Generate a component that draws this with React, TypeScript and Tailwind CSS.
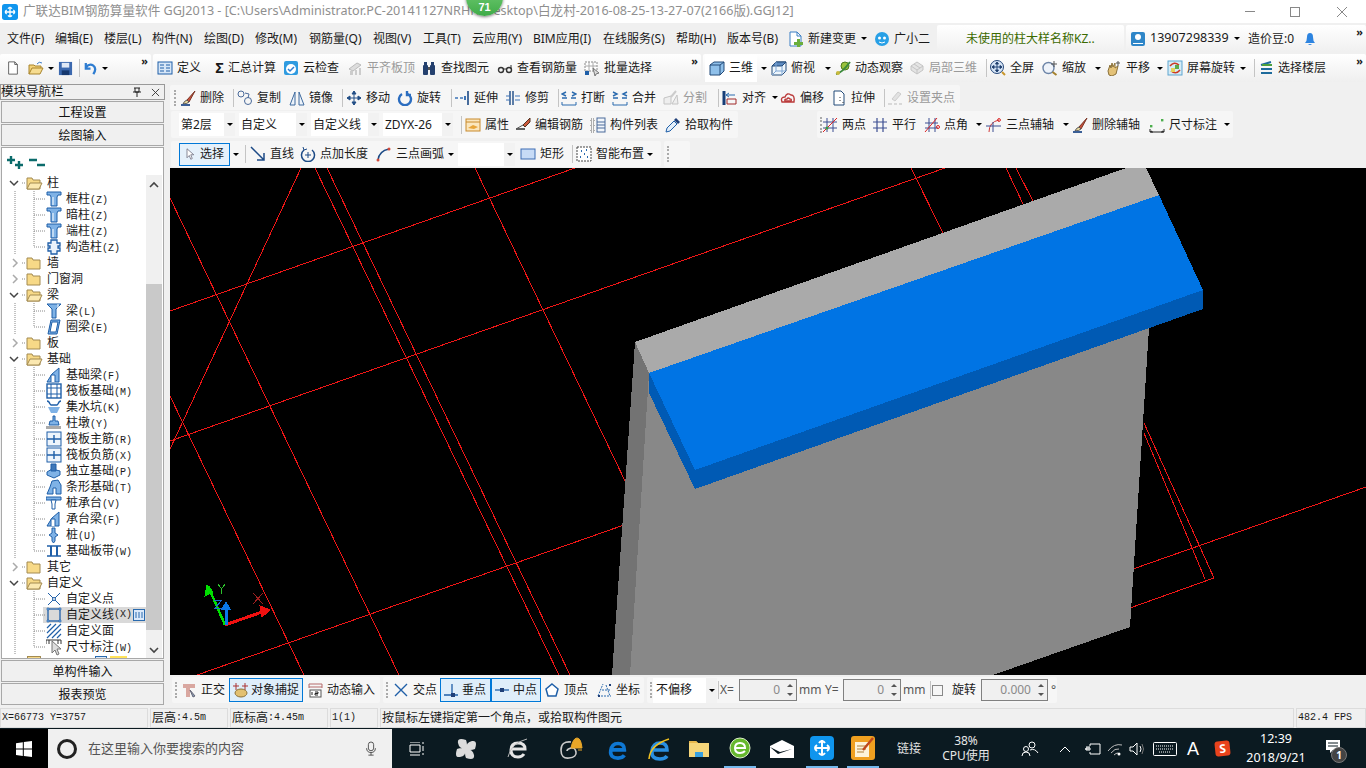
import type { ReactNode } from "react";

// toolbar and tree icons, all in a 16x16 box
const B = "#1f5fa8";
const L = "#7fb2e6";
const ICONS: Record<string, ReactNode> = {
  new: <path d="M3 1h7l3 3v11H3z M10 1v3h3" fill="#fff" stroke="#555" />,
  open: <><path d="M1 14V5h5l1 1h6v2" fill="#f3d27a" stroke="#a8842c" /><path d="M1 14l3-6h11l-3 6z" fill="#f6dc90" stroke="#a8842c" /><path d="M9 4q2-3 5-1" fill="none" stroke="#3a7bc8" /></>,
  save: <><rect x="1" y="1" width="14" height="14" fill="#3b68ae" /><rect x="4" y="2" width="8" height="5" fill="#dfe8f5" /><rect x="4" y="10" width="8" height="5" fill="#16386e" /></>,
  undo: <path d="M3 2v6h5M3 7q4-5 8-2t0 9" fill="none" stroke="#2f7dd1" strokeWidth="2.4" />,
  def: <><rect x="1" y="2" width="14" height="12" fill="#d6e6f7" stroke={B} /><path d="M3 5h4M3 8h4M3 11h4M9 5h4M9 8h4M9 11h4" stroke={B} /></>,
  cloud: <><rect x="1" y="1" width="14" height="14" rx="2" fill="#2f9be0" /><circle cx="8" cy="9" r="5" fill="#fff" /><path d="M5 9l2 2 4-4" fill="none" stroke="#2f7dd1" strokeWidth="1.5" /></>,
  flat: <><path d="M2 9l8-6 4 2-8 6z" fill="#ddd" stroke="#bbb" /><path d="M3 11h3v4H3zM8 10h2v5H8zM12 8h2v7h-2z" fill="#ccc" /></>,
  binoc: <><rect x="2" y="5" width="5" height="10" rx="1" fill="#24406e" /><rect x="9" y="5" width="5" height="10" rx="1" fill="#24406e" /><rect x="3" y="2" width="3" height="3" fill="#24406e" /><rect x="10" y="2" width="3" height="3" fill="#24406e" /><rect x="7" y="7" width="2" height="3" fill="#555" /></>,
  glasses: <><circle cx="4" cy="10" r="2.5" fill="none" stroke="#333" strokeWidth="1.4" /><circle cx="12" cy="10" r="2.5" fill="none" stroke="#333" strokeWidth="1.4" /><path d="M6 9h4M14 9V5" stroke="#333" /></>,
  batch: <><path d="M1 2h12v9H1z" fill="#fff" stroke="#888" strokeDasharray="2 1" /><path d="M1 6h12M5 2v9M9 2v9" stroke="#aaa" /><rect x="1" y="11" width="4" height="4" fill={B} /><path d="M9 8l6 5-3 1-1 2z" fill="#ddd" stroke="#777" /></>,
  cube: <><path d="M1 5l4-3h10v9l-4 4H1z" fill="#8fc0ea" stroke="#234a78" /><path d="M1 5h10v10M11 5l4-3" fill="none" stroke="#234a78" /></>,
  cubeTop: <><path d="M1 6l4-4h10v9l-4 4H1z" fill="#eef6fc" stroke="#234a78" /><path d="M1 6l4-4h10l-4 4z" fill="#5c8ac0" stroke="#234a78" /><path d="M11 6v9M5 2v9h10M5 11l-4 4" fill="none" stroke="#7ea6d4" /></>,
  orbit: <><circle cx="10" cy="6" r="4" fill="#9ac23c" stroke="#4f7a1c" /><path d="M1 14q6-1 14-12" fill="none" stroke="#3c8a3c" strokeWidth="2" /><circle cx="3" cy="13" r="2" fill="#c9b93c" /></>,
  local3d: <><path d="M2 6l6-4 6 4v4l-6 4-6-4z" fill="#e4e4e4" stroke="#c4c4c4" /><path d="M2 6l6 4 6-4M8 10v4M5 4l6 4" fill="none" stroke="#c4c4c4" /></>,
  full: <><circle cx="7" cy="7" r="6.5" fill="#d5e4f6" stroke="#26487a" /><path d="M7 2v10M2 7h10M7 2l-1.5 2h3zM7 12l-1.5-2h3zM2 7l2-1.5v3zM12 7l-2-1.5v3z" stroke="#26487a" /><path d="M12 12l3 3" stroke="#c8962c" strokeWidth="2" /></>,
  zoom: <><circle cx="6.5" cy="8" r="5.5" fill="#eef3fa" stroke="#6d85a8" strokeWidth="1.4" /><path d="M10.5 12l4 3" stroke="#a5802c" strokeWidth="2" /><path d="M12 1v6M9 4h6" stroke="#555" /></>,
  hand: <><path d="M2 11l2-6 1 3 1-5 1 4 2-4 0 5 3-2-2 8-4 2-3-1z" fill="#e4c278" stroke="#8a7038" /><path d="M12 1v5M10 3h4" stroke="#555" /></>,
  screen: <><rect x="1" y="1" width="14" height="14" fill="#d6ecf6" stroke="#5fa5d0" /><path d="M3 6q4-5 9-1M13 10q-4 5-9 1" fill="none" stroke="#cc3a26" strokeWidth="1.6" /><rect x="4" y="8" width="4" height="4" fill="#e6d35a" /><rect x="8" y="5" width="4" height="4" fill="#5caa4c" /></>,
  floors: <><path d="M3 5l10-3M3 9h11M3 13h11" stroke="#1e6b9c" strokeWidth="2" /><path d="M4 5h10" stroke="#4ca03c" strokeWidth="2" /></>,
  brush: <><path d="M15 1L7 10l2 2z" fill="#c8503c" stroke="#7a3424" /><path d="M7 10q-3 1-4 4 4 0 6-2z" fill="#e6d59a" stroke="#555" /><path d="M1 15h9" stroke="#3b5f96" strokeWidth="2" /></>,
  copy: <><circle cx="4" cy="4" r="3" fill="none" stroke="#4a6a9a" /><circle cx="11" cy="11" r="3.5" fill="none" stroke="#4a6a9a" /><path d="M8 3l4 1-1 4" fill="none" stroke="#4a6a9a" /></>,
  mirror: <path d="M6 2v13H1zM10 2v13h5z" fill="#edf3fa" stroke="#3e6a9e" />,
  move: <path d="M8 1v14M1 8h14M8 1L6 4h4zM8 15l-2-3h4zM1 8l3-2v4zM15 8l-3-2v4z" fill="#224e86" stroke="#224e86" />,
  rotate: <path d="M5 4a6 6 0 1 0 6 0M10 1v4h4" fill="none" stroke="#2b6dc0" strokeWidth="2.4" />,
  extend: <><path d="M14 1v14" stroke="#1c4a86" strokeWidth="1.6" /><path d="M1 8h3M6 8h3" stroke="#3e75b8" strokeWidth="1.6" /><path d="M11 6v4" stroke="#3e75b8" strokeWidth="2" /></>,
  trim: <><path d="M5 1v14M8 1v14" stroke="#1c4a86" strokeWidth="1.4" /><path d="M1 6h4M1 10h4M10 6h5M10 10h5" stroke="#3e75b8" /></>,
  break: <><path d="M1 12v3h14v-3" fill="none" stroke="#2a6aae" /><path d="M1 8h5M10 8h5M5 2L1 4l4 2M11 2l4 2-4 2" fill="none" stroke="#2a6aae" strokeWidth="1.4" /></>,
  merge: <><path d="M1 12v3h14v-3" fill="none" stroke="#2a6aae" /><path d="M1 8h5M10 8h5M1 2l4 2-4 2M15 2l-4 2 4 2" fill="none" stroke="#2a6aae" strokeWidth="1.4" /></>,
  split: <><path d="M1 14V8l7-2v8zM9 14l5-9 1 9z" fill="#eee" stroke="#c4c4c4" /><path d="M13 1L8 7" stroke="#ccc" strokeWidth="2" /></>,
  align: <><path d="M2 1v14" stroke="#173e78" strokeWidth="3" /><path d="M5 14h9v-5H5z" fill="none" stroke="#a02828" /><path d="M4 5h9M4 5l3-2M4 5l3 2" fill="none" stroke="#2a6aae" /></>,
  offset: <path d="M2 12q-2-5 3-5 2-5 6-2 4 0 3 7zM5 11q-1-2 2-2 1-2 3 0 2 0 1 2z" fill="none" stroke="#bb3a3a" strokeWidth="1.4" />,
  stretch: <><path d="M3 1h7l3 3v11H3z" fill="#fff" stroke="#234a78" /><path d="M9 7v1M9 10v1M12 12v1" stroke="#333" /></>,
  grip: <><path d="M11 2l3 2-6 7-3-2z" fill="#e2e2e2" stroke="#ccc" /><path d="M1 14h4M7 14h3M12 14h3" stroke="#bbb" /></>,
  attr: <><rect x="1" y="2" width="14" height="12" fill="#fbe6bd" stroke="#c88a2c" /><path d="M1 5h14" stroke="#c88a2c" /><path d="M3 11l5-3 5 2-4 2z" fill="#e8a53a" /></>,
  pen: <><path d="M15 1L8 8l2 2 5-5z" fill="#cc5a3c" stroke="#553322" /><path d="M1 12h9" stroke="#222" strokeWidth="1.4" /><path d="M1 12l7-4" stroke="#555" /></>,
  list: <><path d="M1 2h3v3H1zM1 7h3v3H1zM1 12h3v3H1z" fill="none" stroke="#666" strokeDasharray="1 1" /><rect x="7" y="1" width="8" height="14" fill="#f2f6fb" stroke="#4a6a9a" /><path d="M7 5h8M7 8h8M7 11h8" stroke="#4a6a9a" /></>,
  pick: <><path d="M1 15l1-4 7-7 3 3-7 7z" fill="#e4effa" stroke="#1f5fa8" /><path d="M9 3l2-2 4 4-2 2z" fill="#1f3f78" /></>,
  two: <><path d="M5 1v14M11 1v14M1 5h14M1 11h14" stroke="#3c4f92" /><path d="M1 15L15 1" stroke="#d22" /><circle cx="5" cy="11" r="1.5" fill="#3c9a3c" /></>,
  para: <path d="M5 1v14M11 1v14M1 5h14M1 11h14" stroke="#3c4f92" strokeWidth="1.2" />,
  angle: <><path d="M5 1v14M11 1v14M1 6h13M1 11h13" stroke="#3c4f92" /><path d="M1 15L13 1" stroke="#d22" /><circle cx="14" cy="10" r="1.5" fill="none" stroke="#d22" /></>,
  arcAux: <><path d="M3 15q0-10 10-12" fill="none" stroke="#d23a3a" /><path d="M0 9h15M7 5v10" stroke="#3c4f92" /><circle cx="13" cy="3" r="1.4" fill="none" stroke="#d22" /></>,
  dim: <><path d="M1 15h14M1 12v3M15 12v3M1 15l2-1v2M15 15l-2-1v2" stroke="#222" fill="none" /><rect x="1" y="8" width="2.4" height="2.4" fill="#4cae4c" /><rect x="12" y="2" width="2.4" height="2.4" fill="#4cae4c" /></>,
  cursor: <path d="M4 1v12l3-3 2 5 2-1-2-5h4z" fill="#fff" stroke="#667" />,
  line: <path d="M1 1l13 13M14 7v7H7" fill="none" stroke="#1c4a86" strokeWidth="1.5" />,
  ptlen: <><path d="M4 4a6.5 6.5 0 1 0 8 0" fill="none" stroke="#1c4a86" strokeWidth="1.5" /><path d="M8 6v6M5 9h6M3 1l1 3 3-1" fill="none" stroke="#1c4a86" /></>,
  arc: <><path d="M2 14q1-9 11-11" fill="none" stroke="#1c4a86" strokeWidth="1.5" /><circle cx="2" cy="14" r="1.5" fill="#d24a3a" /><circle cx="13" cy="3" r="1.5" fill="#d24a3a" /></>,
  rect: <rect x="1" y="3" width="14" height="10" fill="#c7dbf6" stroke="#3d6db3" />,
  smart: <><rect x="1" y="1" width="14" height="14" fill="#fff" stroke="#444" strokeDasharray="2 1" /><path d="M5 5h1M10 4h1M8 8h1M4 11h1M11 11h1" stroke="#2a6aae" strokeWidth="2" /></>,
  ortho: <><path d="M2 2h12v4h-5v9H5V6H2z" fill="#d9a7a0" /><path d="M9 8l5 6-2 1z" fill="#8aa0b8" stroke="#667" /></>,
  snap: <><path d="M4 1v7M13 1v7M1 4h6M10 4h6" stroke="#a33" /><ellipse cx="9" cy="11" rx="6" ry="4" fill="#e2c070" stroke="#8a7038" /></>,
  dyn: <><path d="M2 2h13M2 5h13M2 2v4M15 2v4" stroke="#b56a6a" fill="none" /><rect x="3" y="8" width="11" height="7" fill="#fff" stroke="#555" /><path d="M5 10v3M8 10h3v1.5H8V13h3" stroke="#222" fill="none" /></>,
  cross: <path d="M2 2l12 12M14 2L2 14" stroke="#1f5fa8" strokeWidth="1.4" />,
  perp: <><path d="M1 13h14M9 2v11" stroke="#1f5fa8" strokeWidth="1.3" /><rect x="8" y="11" width="4" height="4" fill="#1f3f78" /></>,
  mid: <><path d="M1 8h14" stroke="#1f5fa8" strokeWidth="1.3" /><rect x="6" y="6" width="4" height="4" fill="#1f3f78" /></>,
  vertex: <path d="M8 2l6 5-2 7H4L2 7z" fill="#fff" stroke="#1f5fa8" strokeWidth="1.5" />,
  coord: <><path d="M2 14l5-12M2 14h13M6 8h8M10 3l4 11" stroke="#2a6aae" strokeDasharray="2 1" /><path d="M2 13h2v2H2zM13 2h2v2h-2z" fill="#1f3f78" /></>,
  change: <><path d="M2 1h7l4 4v10H2z" fill="#fff" stroke="#3b7fc4" /><path d="M9 1v4h4" fill="none" stroke="#3b7fc4" /><path d="M9 8h3v3h3v3h-3v2H9v-2H6v-3h3z" fill="#6aae3c" /></>,
  bot: <><circle cx="8" cy="8" r="7" fill="#28a0e6" /><circle cx="5.5" cy="7" r="1.5" fill="#fff" /><circle cx="10.5" cy="7" r="1.5" fill="#fff" /><path d="M5 11q3 2 6 0" fill="none" stroke="#fff" /></>,
  user: <><rect x="1" y="1" width="14" height="14" rx="2" fill="#2f86c8" /><circle cx="8" cy="6" r="3" fill="#fff" /><path d="M3 13h10v-1H3z" fill="#fff" /></>,
  bell: <path d="M3 12q2-2 2-6 0-4 3-4t3 4q0 4 2 6zM6 13q2 2 4 0z" fill="#2d84e0" />,
  // tree
  col: <><path d="M1 1h14v3h-3l-1 2v9H5V6L4 4H1z" fill={L} stroke={B} /><path d="M7 6v8" stroke="#fff" /></>,
  gz: <path d="M5 1h6v3h3v3h-2v2h2v3h-3v3H5v-3H2V9h2V7H2V4h3z" fill="#eaf2fb" stroke={B} strokeWidth="1.3" />,
  beam: <><path d="M1 1h14l-5 5v9H6V6z" fill={L} stroke={B} /><path d="M12 1v6" stroke="#fff" /></>,
  ring: <path d="M5 1h9l-3 14H2zM6 3l-2 10h6l2-10z" fill={L} stroke={B} />,
  jcl: <><path d="M1 15l5-8 7-6v14z" fill={L} stroke={B} /><path d="M5 15v-7h4v7" fill="#fff" stroke={B} /></>,
  raft: <><rect x="1" y="1" width="14" height="14" fill="#fff" stroke={B} strokeWidth="1.4" /><path d="M1 5h14M1 11h14M5 1v14M11 1v14" stroke={B} /></>,
  pit: <><path d="M1 2q2 0 3 3l1 1h6l1-1q1-3 3-3" fill="none" stroke={B} strokeWidth="1.3" /><path d="M2 8h12l-3 6H5z" fill={L} /></>,
  pier: <><path d="M7 1h2v5h3l1 4H3l1-4h3z" fill={L} stroke={B} /><rect x="0" y="11" width="15" height="3" fill="#aaa" /></>,
  rafm: <><rect x="1" y="1" width="14" height="14" fill="#eef5fc" stroke={B} /><path d="M1 8h14M8 4v8" stroke={B} strokeWidth="1.4" /></>,
  foot: <><path d="M1 9l5-3 8 2v4l-6 3-7-3z" fill={L} stroke={B} /><path d="M5 1h5v7H5z" fill="#3f77b8" stroke={B} /></>,
  strip: <path d="M1 15l3-7 2-6 6-1 3 5v9h-5V9H7v6z" fill={L} stroke={B} />,
  cap: <><path d="M0 2h15v3H0z" fill={L} stroke={B} /><path d="M5 5h5l-1 4v5H6V9z" fill="#fff" stroke={B} /></>,
  pile: <><path d="M6 1h3v5l3 2-3 2v4l-1.5 2L6 14v-4L3 8l3-2z" fill={L} stroke={B} /></>,
  band: <><path d="M1 3h14M1 13h14" stroke={B} strokeWidth="1.6" /><path d="M5 3v10M11 3v10" stroke={B} strokeWidth="2" /></>,
  cpt: <><path d="M2 2l12 12M14 2L2 14" stroke={B} /><circle cx="8" cy="8" r="1.5" fill="#fff" stroke={B} /></>,
  cln: <><rect x="2" y="2" width="12" height="12" fill="none" stroke={B} strokeWidth="1.3" /><path d="M1 1h2v2H1zM13 1h2v2h-2zM1 13h2v2H1zM13 13h2v2h-2z" fill={L} stroke={B} strokeWidth=".6" /></>,
  cfc: <path d="M1 5l4-4M1 10l9-9M1 15L15 1M6 15l9-9M11 15l4-4" stroke={B} strokeWidth="1.2" />,
  mark: <path d="M0 1h15M0 1v4M15 1v4M3 1v4M12 1v4" stroke="#333" fill="none" />,
};

const Icon = ({ n, c = "w-4 h-4" }: { n: string; c?: string }) => (
  <svg viewBox="0 0 16 16" className={`${c} shrink-0`}>
    {ICONS[n]}
  </svg>
);

const Caret = ({ w = "w-[14px]" }: { w?: string }) => (
  <div className={`${w} h-full shrink-0 flex items-center justify-center`}>
    <div className="w-0 h-0 border-x-[3px] border-x-transparent border-t-[3px] border-t-black" />
  </div>
);

const Sep = ({ w = "w-[8px]" }: { w?: string }) => (
  <div className={`${w} h-full shrink-0 flex items-center justify-center`}>
    <div className="w-px h-[18px] bg-[#c4c4c4]" />
  </div>
);

const Grip = ({ w = "w-[9px]" }: { w?: string }) => (
  <div className={`${w} h-full shrink-0 flex items-center pl-[3px]`}>
    <div className="h-[16px] border-l-2 border-dotted border-[#aaaaaa]" />
  </div>
);

const More = () => (
  <span className="ml-auto mr-[3px] self-start text-[11px] leading-[14px] font-bold">»</span>
);

const Tool = ({ i, t, w, dim, sel }: { i?: string; t: string; w: string; dim?: boolean; sel?: boolean }) => (
  <div
    className={`${w} shrink-0 flex items-center whitespace-nowrap ${dim ? "text-[#9a9a9a]" : "text-[#1a1a1a]"} ${
      sel ? "border border-[#0078d7] bg-[#dfeefa] h-[24px] pl-[2px] gap-[3px]" : "h-full gap-1"
    }`}
  >
    {i && <Icon n={i} />}
    <span>{t}</span>
  </div>
);

const Combo = ({ t, w }: { t: string; w: string }) => (
  <div className={`${w} h-[23px] shrink-0 bg-white flex items-center pl-[2px] mr-[4px]`}>
    <span className="flex-1 whitespace-nowrap">{t}</span>
    <div className="w-[11px] h-full bg-[#f2f2f2]">
      <Caret w="w-[11px]" />
    </div>
  </div>
);

const M = ({ children }: { children: ReactNode }) => (
  <span className="[font-family:'Liberation_Mono',monospace] text-[10px]">{children}</span>
);

const Spin = ({ v, w }: { v: string; w: string }) => (
  <div className={`${w} h-[22px] shrink-0 border border-[#808080] bg-[#f0f0f0] flex items-center text-[#8a8a8a]`}>
    <span className="flex-1 text-right pr-1">{v}</span>
    <div className="w-[12px] h-full flex flex-col items-center justify-center gap-[6px]">
      <div className="w-0 h-0 border-x-[3px] border-x-transparent border-b-[3px] border-b-[#555]" />
      <div className="w-0 h-0 border-x-[3px] border-x-transparent border-t-[3px] border-t-[#555]" />
    </div>
  </div>
);

const AppMark = ({ c }: { c: string }) => (
  <svg viewBox="0 0 24 24" className={c}>
    <rect width="24" height="24" rx="4" fill="#0f95ee" />
    <path d="M12 4v16M5 12h14M9 7q3-4 6 0M9 17q3 4 6 0M7 9q-4 3 0 6M17 9q4 3 0 6" fill="none" stroke="#fff" strokeWidth="2" />
  </svg>
);

const seg = "h-full bg-linear-to-b from-white to-[#efefef] rounded-[2px] flex items-center";
const segFlat = "bg-[#f6f6f6] rounded-[2px] flex items-center";

const MENU: [string, string][] = [
  ["文件(F)", "w-[48px]"],
  ["编辑(E)", "w-[49px]"],
  ["楼层(L)", "w-[48px]"],
  ["构件(N)", "w-[52px]"],
  ["绘图(D)", "w-[51px]"],
  ["修改(M)", "w-[54px]"],
  ["钢筋量(Q)", "w-[64px]"],
  ["视图(V)", "w-[50px]"],
  ["工具(T)", "w-[49px]"],
  ["云应用(Y)", "w-[61px]"],
  ["BIM应用(I)", "w-[70px]"],
  ["在线服务(S)", "w-[73px]"],
  ["帮助(H)", "w-[51px]"],
  ["版本号(B)", "w-[61px]"],
];

type Row = { t: string; k?: string; r?: "open" | "closed"; i?: string; last?: boolean; sel?: boolean };

const TREE: Row[] = [
  { t: "柱", r: "open" },
  { t: "框柱", k: "(Z)", i: "col" },
  { t: "暗柱", k: "(Z)", i: "col" },
  { t: "端柱", k: "(Z)", i: "col" },
  { t: "构造柱", k: "(Z)", i: "gz", last: true },
  { t: "墙", r: "closed" },
  { t: "门窗洞", r: "closed" },
  { t: "梁", r: "open" },
  { t: "梁", k: "(L)", i: "beam" },
  { t: "圈梁", k: "(E)", i: "ring", last: true },
  { t: "板", r: "closed" },
  { t: "基础", r: "open" },
  { t: "基础梁", k: "(F)", i: "jcl" },
  { t: "筏板基础", k: "(M)", i: "raft" },
  { t: "集水坑", k: "(K)", i: "pit" },
  { t: "柱墩", k: "(Y)", i: "pier" },
  { t: "筏板主筋", k: "(R)", i: "rafm" },
  { t: "筏板负筋", k: "(X)", i: "rafm" },
  { t: "独立基础", k: "(P)", i: "foot" },
  { t: "条形基础", k: "(T)", i: "strip" },
  { t: "桩承台", k: "(V)", i: "cap" },
  { t: "承台梁", k: "(F)", i: "jcl" },
  { t: "桩", k: "(U)", i: "pile" },
  { t: "基础板带", k: "(W)", i: "band", last: true },
  { t: "其它", r: "closed" },
  { t: "自定义", r: "open" },
  { t: "自定义点", i: "cpt" },
  { t: "自定义线", k: "(X)", i: "cln", sel: true },
  { t: "自定义面", i: "cfc" },
  { t: "尺寸标注", k: "(W)", i: "mark", last: true },
];

const dotted = { stroke: "#888", strokeDasharray: "1 1", fill: "none" };

const TreeRow = ({ row, idx }: { row: Row; idx: number }) => {
  if (row.r) {
    return (
      <div className="h-4 flex items-center whitespace-nowrap">
        <svg viewBox="0 0 47 16" className="w-[47px] h-4 shrink-0">
          {row.r === "open" ? (
            <path d="M10 6l4 4 4-4" fill="none" stroke="#444" strokeWidth="1.5" />
          ) : (
            <path d="M13 4l4 4-4 4" fill="none" stroke="#aaa" strokeWidth="1.5" />
          )}
          <path d="M22 8h4" {...dotted} />
          <path d="M27 3h5l1 2h7v9H27z" fill="#f7d987" stroke="#a38a50" />
          {row.r === "open" && <path d="M27 14l3-6h12l-3 6z" fill="#fbe8b0" stroke="#a38a50" />}
        </svg>
        <span>{row.t}</span>
      </div>
    );
  }
  return (
    <div className="h-4 flex items-center whitespace-nowrap relative">
      <svg viewBox="0 0 64 16" className="w-[64px] h-4 shrink-0 relative z-10">
        <path d="M15 0v16" {...dotted} />
        <path d={row.last ? "M34 0v8h11" : "M34 0v16M34 8h11"} {...dotted} />
        <svg x="46" y="0" width="16" height="16" viewBox="0 0 16 16">
          {ICONS[row.i!]}
        </svg>
      </svg>
      <span className={`pr-[2px] flex-1 ${row.sel ? "bg-[#d9d9d9] h-4 -ml-[21px] pl-[23px] flex items-center" : "pl-[2px]"}`}>
        {row.t}
        <M>{row.k}</M>
      </span>
      {row.sel && (
        <svg viewBox="0 0 12 12" className="w-3 h-3 absolute right-[1px] top-[2px]">
          <rect x=".5" y=".5" width="11" height="11" fill="#dbe9fa" stroke="#2a6aae" />
          <path d="M3 3v6M6 3v6M9 3v6" stroke="#2a6aae" />
        </svg>
      )}
      {idx === 29 && (
        <svg viewBox="0 0 10 16" className="w-[10px] h-4 absolute left-[51px] top-[1px] z-20">
          <path d="M1 1v12l3-3 2 5 2-1-2-5h4z" fill="#ddd" stroke="#777" />
        </svg>
      )}
    </div>
  );
};

const PANEL_BTN = "mx-[1px] h-[22px] shrink-0 border border-[#a8a8a8] bg-[#f0f0f0] flex items-center justify-center pt-[2px] text-[#111]";

const Canvas = () => (
  <svg viewBox="170 168 1196 507" className="w-full flex-1 min-h-0 bg-black block" shapeRendering="crispEdges">
    <g stroke="#f01616" strokeWidth="1" fill="none">
      <path d="M170 311L575 168M170 441L945 168M197 675L624 525M1133 569L1366 487M1130 608L1214 578" />
      <path d="M475 168L626 483M315 168L559 675M327 168L570 675M170 198L399 675M170 396L304 675M301 168L170 449" />
      <path d="M911 168L943 233M1006 168L1024 206M1016 168L1033 201M1144 433L1205 579M1144 423L1214 578" />
    </g>
    <path d="M635 342L1126 168H1146L1159 195L649 373Z" fill="#aaaaaa" />
    <path d="M649 373L695 489L1149 328L1130 627L993 675H625Z" fill="#888888" />
    <path d="M635 342L649 373L630 675H612Z" fill="#737373" />
    <path d="M649 373L1159 195L1203 290L695 470Z" fill="#0074e4" />
    <path d="M649 373L695 470L1203 290V309L695 489L649 393Z" fill="#005ab4" />
    <g fill="none" strokeWidth="1">
      <path d="M208 586L225 625" stroke="#00e000" strokeWidth="2.5" />
      <path d="M207 585L205 596L213 592Z" fill="#00e000" stroke="#00e000" />
      <path d="M225 625L262 612" stroke="#f01010" strokeWidth="3" />
      <path d="M270 610L260 606L262 617Z" fill="#f01010" stroke="#f01010" />
      <path d="M226 625V608" stroke="#0a78e8" strokeWidth="3" />
      <path d="M226 602L222 609H230Z" fill="#0a78e8" stroke="#0a78e8" />
      <path d="M218 584L221.5 589V594M225 584L221.5 589" stroke="#2cc22c" />
      <path d="M253 593L263 604M263 593L253 604" stroke="#a02020" />
      <path d="M214 600H222L215 608H223" stroke="#1a6ad0" />
    </g>
  </svg>
);

const Task = ({ w, children, on }: { w: string; children: ReactNode; on?: boolean }) => (
  <div className={`${w} h-full shrink-0 flex items-center justify-center`}>
    <div className={`h-full flex items-center justify-center ${on ? "w-[32px] border-b-2 border-[#76b9ed]" : ""}`}>{children}</div>
  </div>
);

export default function App() {
  return (
    <div className="w-[1366px] h-[768px] overflow-hidden flex flex-col bg-[#f0f0f0] relative text-[12px] leading-none text-[#1a1a1a] [font-family:'Noto_Sans','Noto_Sans_CJK_SC',sans-serif]">
      {/* title bar */}
      <div className="h-[23px] shrink-0 bg-white flex items-center pl-[2px] text-[#8f8f8f]">
        <AppMark c="w-[16px] h-[16px] mr-[5px]" />
        <span className="whitespace-nowrap text-[12.6px]">
          广联达BIM钢筋算量软件 GGJ2013 - [C:\Users\Administrator.PC-20141127NRHH\Desktop\白龙村-2016-08-25-13-27-07(2166版).GGJ12]
        </span>
        <div className="ml-auto flex items-center">
          <div className="w-[10px] h-px bg-[#888] mr-[35px]" />
          <div className="w-[10px] h-[10px] border border-[#888] mr-[36px]" />
          <svg viewBox="0 0 12 12" className="w-3 h-3 mr-[18px]">
            <path d="M1 1l10 10M11 1L1 11" stroke="#888" />
          </svg>
        </div>
      </div>

      {/* menu bar */}
      <div className="h-[31px] shrink-0 flex items-center gap-[2px]">
        <div className="w-[935px] h-[29px] pl-[7px] flex items-center bg-[#f0f0f0]">
          {MENU.map(([t, w]) => (
            <div key={t} className={`${w} shrink-0 whitespace-nowrap`}>
              {t}
            </div>
          ))}
          <Tool i="change" t="新建变更" w="w-[71px]" />
          <Caret w="w-[10px]" />
          <div className="w-[5px] shrink-0" />
          <Tool i="bot" t="广小二" w="w-[56px]" />
        </div>
        <div className="w-[187px] h-[27px] bg-linear-to-b from-white to-[#f0f0f0] rounded-[2px] flex items-center pl-[29px] text-[#3c6a00] whitespace-nowrap">
          未使用的柱大样名称KZ..
        </div>
        <div className="flex-1 h-[27px] bg-linear-to-b from-white to-[#f0f0f0] rounded-[2px] flex items-center pl-[4px] gap-1 whitespace-nowrap">
          <Icon n="user" />
          <span className="text-[12.5px] w-[76px]">13907298339</span>
          <Caret w="w-[14px]" />
          <span>造价豆:0</span>
          <Icon n="bell" c="w-4 h-4 ml-[4px]" />
          <More />
        </div>
      </div>

      {/* main toolbar */}
      <div className="h-[29px] shrink-0 flex gap-[2px] pb-[1px]">
        <div className={`${seg} w-[151px] pl-[6px]`}>
          <Icon n="new" c="w-[14px] h-4 mr-[8px]" />
          <Icon n="open" c="w-4 h-4" />
          <Caret w="w-[14px]" />
          <Icon n="save" c="w-[15px] h-[15px] mr-[2px]" />
          <Sep w="w-[8px]" />
          <Icon n="undo" c="w-[15px] h-[15px]" />
          <Caret w="w-[14px]" />
          <More />
        </div>
        <div className={`${seg} w-[548px] pl-[4px]`}>
          <Tool i="def" t="定义" w="w-[54px]" />
          <div className="w-[72px] h-full shrink-0 flex items-center whitespace-nowrap">
            <span className="w-[17px] text-[14px] font-bold text-center">Σ</span>
            <span>汇总计算</span>
          </div>
          <Tool i="cloud" t="云检查" w="w-[64px]" />
          <Tool i="flat" t="平齐板顶" w="w-[74px]" dim />
          <Tool i="binoc" t="查找图元" w="w-[76px]" />
          <Tool i="glasses" t="查看钢筋量" w="w-[87px]" />
          <Tool i="batch" t="批量选择" w="w-[84px]" />
          <More />
        </div>
        <div className={`${seg} flex-1`}>
          <div className="w-[52px] h-[27px] shrink-0 bg-white flex items-center pl-[4px] gap-1 whitespace-nowrap ml-[2px]">
            <Icon n="cube" />
            <span>三维</span>
          </div>
          <Caret w="w-[14px]" />
          <Tool i="cubeTop" t="俯视" w="w-[49px]" />
          <Caret w="w-[15px]" />
          <Tool i="orbit" t="动态观察" w="w-[74px]" />
          <Tool i="local3d" t="局部三维" w="w-[73px]" dim />
          <Sep />
          <Tool i="full" t="全屏" w="w-[52px]" />
          <Tool i="zoom" t="缩放" w="w-[48px]" />
          <Caret w="w-[16px]" />
          <Tool i="hand" t="平移" w="w-[47px]" />
          <Caret w="w-[14px]" />
          <Tool i="screen" t="屏幕旋转" w="w-[69px]" />
          <Caret w="w-[14px]" />
          <Sep />
          <Tool i="floors" t="选择楼层" w="w-[72px]" />
          <More />
        </div>
      </div>

      <div className="flex-1 min-h-0 flex">
        {/* module navigation panel */}
        <div className="w-[170px] shrink-0 flex">
          <div className="w-[165px] flex flex-col">
            <div className="h-[16px] shrink-0 border border-[#999] flex items-center whitespace-nowrap text-[12.5px] mt-[1px] mb-[1px]">
              模块导航栏
              <svg viewBox="0 0 10 10" className="w-[10px] h-[10px] ml-auto mr-[9px]">
                <path d="M2 1h6M3 1v4h4V1M1 5h8M5 5v5" stroke="#222" fill="none" />
              </svg>
              <svg viewBox="0 0 10 10" className="w-[9px] h-[9px] mr-[4px]">
                <path d="M1 1l8 8M9 1L1 9" stroke="#333" />
              </svg>
            </div>
            <div className={`${PANEL_BTN} mb-[1px]`}>工程设置</div>
            <div className={`${PANEL_BTN} mb-[1px]`}>绘图输入</div>
            <div className="flex-1 min-h-0 ml-[1px] mr-[1px] mb-[1px] border border-[#a8a8a8] bg-white flex flex-col">
              <div className="h-[27px] shrink-0 flex items-center pl-[5px] gap-[4px]">
                <svg viewBox="0 0 18 16" className="w-[18px] h-4">
                  <path d="M4 2v8M0 6h8M12 7v8M8 11h8" stroke="#0b6b6b" strokeWidth="2.4" />
                </svg>
                <svg viewBox="0 0 18 16" className="w-[18px] h-4">
                  <path d="M0 6h8M8 11h8" stroke="#0b6b6b" strokeWidth="2.4" />
                </svg>
              </div>
              <div className="flex-1 min-h-0 flex">
                <div className="w-[146px] -ml-[2px] overflow-hidden">
                  {TREE.map((row, idx) => (
                    <TreeRow key={idx} row={row} idx={idx} />
                  ))}
                  {/* next group, cut off by the bottom of the panel */}
                  <div className="h-4 flex items-start pl-[27px] whitespace-nowrap">
                    <div className="w-[14px] h-4 bg-[#f7d987] border border-[#a38a50] mt-[1px]" />
                    <div className="w-[12px] h-4 bg-[#dbe9fa] border border-[#2a6aae] ml-[54px] mt-[1px]" />
                    <div className="w-[17px] h-4 bg-[#ffe35a] ml-[3px] mt-[1px]" />
                  </div>
                </div>
                <div className="w-[16px] bg-[#f0f0f0] flex flex-col items-center">
                  <svg viewBox="0 0 16 16" className="w-4 h-4 shrink-0 mt-[2px]">
                    <path d="M4 10l4-4 4 4" fill="none" stroke="#444" strokeWidth="1.6" />
                  </svg>
                  <div className="flex-1" />
                  <div className="w-full h-[346px] shrink-0 bg-[#c9c9c9]" />
                  <svg viewBox="0 0 16 16" className="w-4 h-[28px] shrink-0">
                    <path d="M4 12l4 4 4-4" fill="none" stroke="#444" strokeWidth="1.6" />
                  </svg>
                </div>
              </div>
            </div>
            <div className={`${PANEL_BTN} mb-[1px]`}>单构件输入</div>
            <div className={PANEL_BTN}>报表预览</div>
          </div>
        </div>

        <div className="flex-1 min-w-0 flex flex-col">
          {/* edit toolbar */}
          <div className="h-[28px] shrink-0 flex pt-[2px] pb-[1px]">
            <div className={`${segFlat} w-[790px] pl-[1px]`}>
              <Grip />
              <Tool i="brush" t="删除" w="w-[50px]" />
              <Sep w="w-[7px]" />
              <Tool i="copy" t="复制" w="w-[52px]" />
              <Tool i="mirror" t="镜像" w="w-[50px]" />
              <Sep w="w-[7px]" />
              <Tool i="move" t="移动" w="w-[51px]" />
              <Tool i="rotate" t="旋转" w="w-[51px]" />
              <Sep w="w-[6px]" />
              <Tool i="extend" t="延伸" w="w-[51px]" />
              <Tool i="trim" t="修剪" w="w-[50px]" />
              <Sep w="w-[6px]" />
              <Tool i="break" t="打断" w="w-[51px]" />
              <Tool i="merge" t="合并" w="w-[51px]" />
              <Tool i="split" t="分割" w="w-[51px]" dim />
              <Sep w="w-[8px]" />
              <Tool i="align" t="对齐" w="w-[47px]" />
              <Caret w="w-[11px]" />
              <Tool i="offset" t="偏移" w="w-[51px]" />
              <Tool i="stretch" t="拉伸" w="w-[50px]" />
              <Sep w="w-[6px]" />
              <Tool i="grip" t="设置夹点" w="w-[71px]" dim />
            </div>
          </div>

          {/* property toolbar */}
          <div className="h-[29px] shrink-0 flex pb-[2px]">
            <div className={`${segFlat} w-[567px] pl-[8px] ml-[1px]`}>
              <Combo t="第2层" w="w-[56px]" />
              <Combo t="自定义" w="w-[68px]" />
              <Combo t="自定义线" w="w-[68px]" />
              <Combo t="ZDYX-26" w="w-[70px]" />
              <Sep w="w-[8px]" />
              <Tool i="attr" t="属性" w="w-[50px]" />
              <Tool i="pen" t="编辑钢筋" w="w-[75px]" />
              <Tool i="list" t="构件列表" w="w-[75px]" />
              <Tool i="pick" t="拾取构件" w="w-[70px]" />
            </div>
            <div className={`${segFlat} w-[416px] ml-[79px]`}>
              <Grip w="w-[5px]" />
              <Tool i="two" t="两点" w="w-[50px]" />
              <Tool i="para" t="平行" w="w-[52px]" />
              <Tool i="angle" t="点角" w="w-[47px]" />
              <Caret w="w-[15px]" />
              <Tool i="arcAux" t="三点辅轴" w="w-[73px]" />
              <Caret w="w-[13px]" />
              <Tool i="brush" t="删除辅轴" w="w-[77px]" />
              <Tool i="dim" t="尺寸标注" w="w-[72px]" />
              <Caret w="w-[12px]" />
            </div>
          </div>

          {/* draw toolbar */}
          <div className="h-[28px] shrink-0 flex py-[1px]">
            <div className={`${segFlat} w-[490px] pl-[8px] ml-[1px]`}>
              <div className="w-[51px] h-[23px] shrink-0 border border-[#0078d7] bg-[#e5f1fb] flex items-center pl-[4px] gap-[4px] whitespace-nowrap">
                <Icon n="cursor" c="w-3 h-[14px]" />
                <span>选择</span>
              </div>
              <Caret w="w-[11px]" />
              <Sep w="w-[9px]" />
              <Tool i="line" t="直线" w="w-[50px]" />
              <Tool i="ptlen" t="点加长度" w="w-[76px]" />
              <Tool i="arc" t="三点画弧" w="w-[71px]" />
              <Caret w="w-[8px]" />
              <div className="w-[57px] h-[23px] shrink-0 ml-[3px] bg-white flex items-center justify-end">
                <div className="w-[11px] h-full bg-[#f2f2f2]">
                  <Caret w="w-[11px]" />
                </div>
              </div>
              <div className="w-[5px] shrink-0" />
              <Tool i="rect" t="矩形" w="w-[49px]" />
              <Sep w="w-[7px]" />
              <Tool i="smart" t="智能布置" w="w-[70px]" />
              <Caret w="w-[7px]" />
            </div>
            <div className={`${segFlat} w-[26px] ml-[3px]`}>
              <Grip w="w-[7px]" />
            </div>
          </div>

          <Canvas />

          {/* snap toolbar */}
          <div className="h-[30px] shrink-0 flex items-center py-[2px] pl-[2px] gap-[3px]">
            <div className={`${segFlat} w-[208px] h-full`}>
              <Grip />
              <Tool i="ortho" t="正交" w="w-[48px]" />
              <Tool i="snap" t="对象捕捉" w="w-[74px]" sel />
              <div className="w-[4px] shrink-0" />
              <Tool i="dyn" t="动态输入" w="w-[70px]" />
            </div>
            <div className={`${segFlat} w-[261px] h-full`}>
              <Grip w="w-[10px]" />
              <Tool i="cross" t="交点" w="w-[47px]" />
              <Tool i="perp" t="垂点" w="w-[51px]" sel />
              <Tool i="mid" t="中点" w="w-[50px]" sel />
              <div className="w-[3px] shrink-0" />
              <Tool i="vertex" t="顶点" w="w-[52px]" />
              <Tool i="coord" t="坐标" w="w-[44px]" />
            </div>
            <div className={`${segFlat} w-[410px] h-full text-[#555]`}>
              <Grip w="w-[6px]" />
              <div className="w-[64px] h-[25px] shrink-0 bg-white flex items-center pl-[3px] text-[#1a1a1a] whitespace-nowrap">
                <span className="flex-1">不偏移</span>
                <div className="w-[11px] h-full bg-[#f2f2f2]">
                  <Caret w="w-[11px]" />
                </div>
              </div>
              <Sep w="w-[3px]" />
              <span className="w-[19px] shrink-0">X=</span>
              <Spin v="0" w="w-[58px]" />
              <span className="w-[28px] shrink-0 pl-[2px]">mm</span>
              <span className="w-[18px] shrink-0">Y=</span>
              <Spin v="0" w="w-[58px]" />
              <span className="w-[27px] shrink-0 pl-[2px]">mm</span>
              <Sep w="w-[4px]" />
              <div className="w-[11px] h-[11px] shrink-0 border border-[#888] mr-[9px]" />
              <span className="w-[29px] shrink-0 text-[#1a1a1a] whitespace-nowrap">旋转</span>
              <Spin v="0.000" w="w-[67px]" />
              <span className="pl-[3px]">°</span>
            </div>
          </div>
        </div>
      </div>

      {/* status bar */}
      <div className="h-[23px] shrink-0 flex items-end gap-[2px] whitespace-nowrap text-[#1a1a1a]">
        <div className="w-[148px] h-[20px] border border-[#dcdcdc] flex items-center pl-[1px]">
          <M>X=66773 Y=3757</M>
        </div>
        <div className="w-[78px] h-[20px] border border-[#dcdcdc] flex items-center pl-[1px]">
          层高<M>:4.5m</M>
        </div>
        <div className="w-[98px] h-[20px] border border-[#dcdcdc] flex items-center pl-[1px]">
          底标高<M>:4.45m</M>
        </div>
        <div className="w-[48px] h-[20px] border border-[#dcdcdc] flex items-center pl-[1px]">
          <M>1(1)</M>
        </div>
        <div className="w-[914px] h-[20px] border border-[#dcdcdc] flex items-center pl-[1px]">
          按鼠标左键指定第一个角点，或拾取构件图元
        </div>
        <div className="flex-1 h-[20px] border border-[#dcdcdc] flex items-center pl-[1px]">
          <M>482.4 FPS</M>
        </div>
      </div>

      {/* windows taskbar */}
      <div className="h-[40px] shrink-0 bg-[#0b1a21] flex items-center text-white border-t border-t-[#0b1a21]">
        <div className="w-[48px] h-full shrink-0 bg-black flex items-center justify-center">
          <svg viewBox="0 0 16 16" className="w-4 h-4">
            <path d="M0 2.2l6.8-1v6.4H0zM7.8 1L16 0v7.6H7.8zM0 8.6h6.8v6.3L0 14zM7.8 8.6H16V16l-8.2-1.1z" fill="#fff" />
          </svg>
        </div>
        <div className="w-[344px] h-full shrink-0 bg-[#f0f0f0] flex items-center pl-[9px] text-[#555] text-[13px] whitespace-nowrap">
          <div className="w-[20px] h-[20px] rounded-full border-[3px] border-[#222] mr-[11px]" />
          在这里输入你要搜索的内容
          <svg viewBox="0 0 16 18" className="w-[14px] h-[16px] ml-auto mr-[14px]">
            <rect x="5" y="1" width="6" height="10" rx="3" fill="none" stroke="#444" />
            <path d="M3 8q0 5 5 5t5-5M8 13v3M5 16h6" fill="none" stroke="#444" />
          </svg>
        </div>
        <Task w="w-[49px]">
          <svg viewBox="0 0 16 14" className="w-4 h-[14px]">
            <path d="M1 0h10M1 13h10M1 3h10v7H1zM14 0v2M14 4v5M14 11v2" fill="none" stroke="#fff" />
          </svg>
        </Task>
        <Task w="w-[50px]">
          <svg viewBox="0 0 22 22" className="w-[22px] h-[22px]">
            <path d="M11 11Q4 11 3 5t8-3q2 5 0 9zM11 11q0-7 6-8t3 8q-5 2-9 0zM11 11q7 0 8 6t-8 3q-2-5 0-9zM11 11q0 7-6 8t-3-8q5-2 9 0z" fill="#dcdcdc" />
          </svg>
        </Task>
        <Task w="w-[54px]">
          <svg viewBox="0 0 22 24" className="w-[22px] h-6">
            <path d="M4 12h14q0-6-7-6t-7 7 7 7q4 0 6-3" fill="none" stroke="#e6e6e6" strokeWidth="3" />
            <path d="M1 20Q4 6 20 2" fill="none" stroke="#bbb" />
          </svg>
        </Task>
        <Task w="w-[52px]">
          <svg viewBox="0 0 28 26" className="w-7 h-[26px] -mt-[4px]">
            <path d="M14 8Q4 7 4 16t8 8 7-6-5-4-4 3" fill="none" stroke="#ccc" strokeWidth="1.6" />
            <path d="M14 14q2-10 6-10t5 10zM21 16h4" fill="#e8a628" stroke="#e8a628" />
          </svg>
        </Task>
        <Task w="w-[42px]">
          <svg viewBox="0 0 22 24" className="w-5 h-[22px]">
            <path d="M4 13h14q0-7-7-7t-8 8 8 8q5 0 7-3" fill="none" stroke="#0f78d4" strokeWidth="4" />
          </svg>
        </Task>
        <Task w="w-[40px]">
          <svg viewBox="0 0 24 24" className="w-6 h-6">
            <path d="M6 13h14q0-7-7-7t-8 8 8 8q5 0 7-3" fill="none" stroke="#2a8fe0" strokeWidth="3.6" />
            <path d="M2 22Q3 8 22 2" fill="none" stroke="#f0c020" strokeWidth="1.6" />
          </svg>
        </Task>
        <Task w="w-[40px]">
          <svg viewBox="0 0 22 18" className="w-[22px] h-[18px]">
            <path d="M1 1h7l2 2h11v14H1z" fill="#f6d67a" />
            <path d="M1 1h7l2 2H1z" fill="#e8b84c" />
            <path d="M7 12h8v5H7z" fill="#38a0e0" />
          </svg>
        </Task>
        <Task w="w-[42px]" on>
          <svg viewBox="0 0 22 22" className="w-[22px] h-[22px]">
            <circle cx="11" cy="11" r="10" fill="#66b82e" stroke="#dff0cc" />
            <path d="M6 11h10q0-5-5-5t-5 5 5 5q3 0 5-2" fill="none" stroke="#fff" strokeWidth="2" />
          </svg>
        </Task>
        <Task w="w-[41px]">
          <svg viewBox="0 0 24 18" className="w-6 h-[18px]">
            <path d="M0 6L12 0l12 6v12H0z" fill="#fff" />
            <path d="M0 7l8 7 14-5-12 3z" fill="#0b1a21" />
          </svg>
        </Task>
        <Task w="w-[40px]" on>
          <AppMark c="w-6 h-6" />
        </Task>
        <Task w="w-[42px]" on>
          <svg viewBox="0 0 24 24" className="w-6 h-6">
            <rect width="24" height="24" rx="3" fill="#f0a020" />
            <rect x="4" y="6" width="14" height="15" fill="#fdf3d8" />
            <path d="M6 10h9M6 13h9M6 16h7" stroke="#b0803a" />
            <path d="M22 2L12 14" stroke="#c0481c" strokeWidth="2.4" />
          </svg>
        </Task>
        <div className="w-[50px] shrink-0 text-center text-[#e0e0e0]">链接</div>
        <div className="w-[64px] shrink-0 flex flex-col items-center gap-[3px] text-[#e6e6e6]">
          <span>38%</span>
          <span>CPU使用</span>
        </div>
        <div className="w-[14px] shrink-0" />
        <Task w="w-[36px]">
          <svg viewBox="0 0 18 16" className="w-[18px] h-4">
            <circle cx="11" cy="4" r="3" fill="none" stroke="#fff" />
            <circle cx="5" cy="8" r="2.5" fill="none" stroke="#fff" />
            <path d="M1 15q0-4 4-4t4 4M9 9q5-2 8 3" fill="none" stroke="#fff" />
          </svg>
        </Task>
        <Task w="w-[34px]">
          <svg viewBox="0 0 12 8" className="w-3 h-2">
            <path d="M1 7l5-5 5 5" fill="none" stroke="#fff" />
          </svg>
        </Task>
        <Task w="w-[21px]">
          <svg viewBox="0 0 16 12" className="w-4 h-3">
            <path d="M5 1h10v10H5M5 1v2M5 9v2M0 6h4M2 3v2M4 3v2M1 5h4v2H1z" fill="none" stroke="#fff" />
          </svg>
        </Task>
        <Task w="w-[24px]">
          <svg viewBox="0 0 16 14" className="w-4 h-[14px]">
            <path d="M1 9Q7 1 15 3M4 11q4-5 8-4M7 13q2-2 4-2" fill="none" stroke="#bbb" />
            <circle cx="12" cy="12" r="1.5" fill="#fff" />
          </svg>
        </Task>
        <Task w="w-[20px]">
          <svg viewBox="0 0 16 14" className="w-4 h-[14px]">
            <path d="M1 5h3l4-4v12L4 9H1zM11 4q2 3 0 6" fill="none" stroke="#fff" />
            <path d="M13 2q3 5 0 10" fill="none" stroke="#777" />
          </svg>
        </Task>
        <Task w="w-[36px]">
          <svg viewBox="0 0 24 14" className="w-6 h-[14px]">
            <rect x=".5" y=".5" width="23" height="13" rx="1" fill="none" stroke="#fff" />
            <path d="M3 4h18M3 7h18M6 10h12" stroke="#fff" strokeDasharray="1 1" />
          </svg>
        </Task>
        <div className="w-[20px] shrink-0 text-center text-[18px] text-white [font-family:'Liberation_Sans',sans-serif]">A</div>
        <Task w="w-[38px]">
          <div className="w-[15px] h-[15px] bg-[#e8431c] rounded-[3px] -rotate-6 flex items-center justify-center text-white text-[12px] font-bold">S</div>
        </Task>
        <div className="w-[70px] shrink-0 flex flex-col items-center gap-[7px] text-white text-[12.5px]">
          <span>12:39</span>
          <span>2018/9/21</span>
        </div>
        <Task w="w-[44px]">
          <div className="flex items-end relative">
            <svg viewBox="0 0 16 16" className="w-4 h-4 -mt-[4px]">
              <path d="M1 1h14v10H8l-3 3v-3H1z" fill="#fff" />
              <path d="M3 4h10M3 7h10" stroke="#0b1a21" />
            </svg>
            <div className="absolute -right-[6px] -bottom-[8px] w-[16px] h-[16px] rounded-full bg-[#444] border border-[#777] text-white text-[10px] font-bold flex items-center justify-center">1</div>
          </div>
        </Task>
      </div>

      {/* floating task-done badge over the title bar */}
      <div className="absolute left-[466px] -top-[21px] w-[37px] h-[37px] rounded-full bg-linear-to-b from-[#7fd67f] to-[#3eab48] shadow-[0_1px_3px_rgba(0,0,0,.5)] flex items-end justify-center pb-[3px] text-white text-[11px] font-bold [font-family:'Liberation_Sans',sans-serif]">
        71
      </div>
    </div>
  );
}
